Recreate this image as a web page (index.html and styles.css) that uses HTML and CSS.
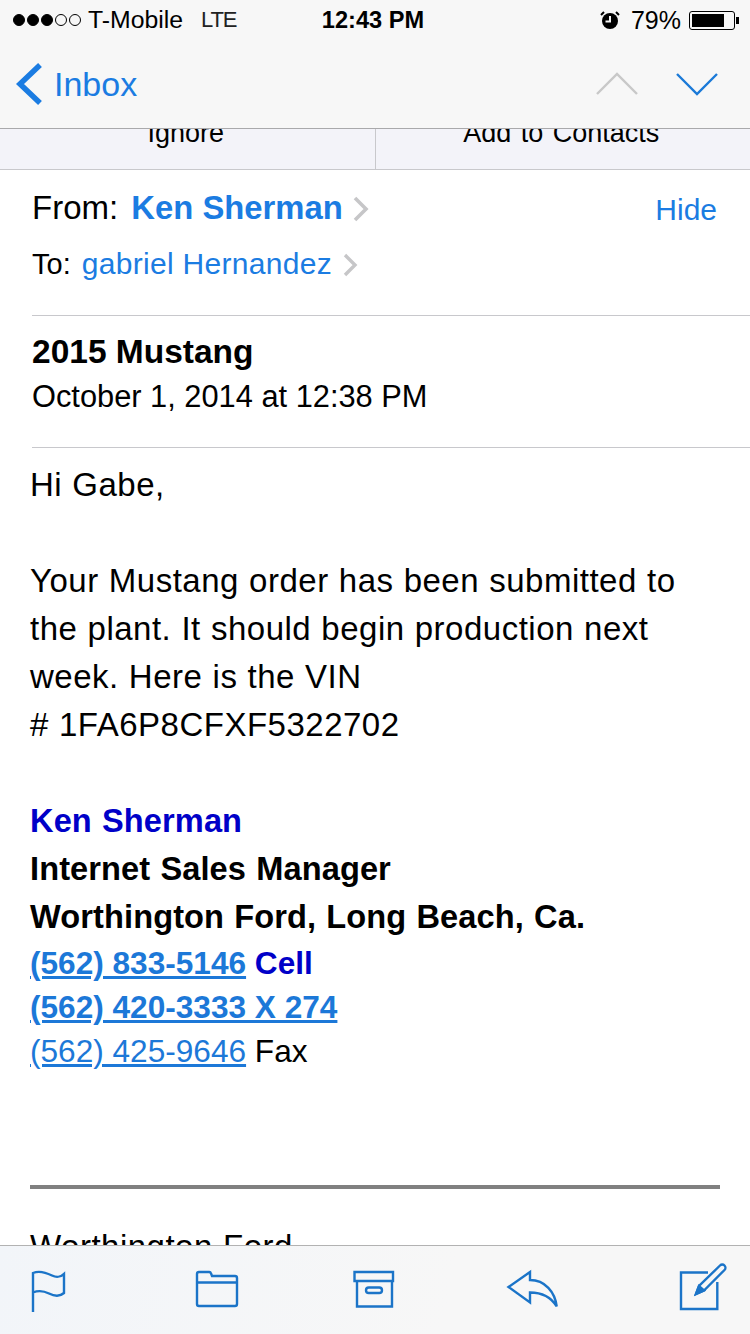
FILE: index.html
```html
<!DOCTYPE html>
<html>
  <head>
    <meta name="viewport" content="width=device-width, initial-scale=1" />
    <title>2015 Mustang</title>
    <link rel="stylesheet" href="styles.css">
  </head>
  <body>
    <div class="phone">
      <div class="topbar">
        <div class="status">
          <div class="status-left">
            <span class="signal">
              <i class="dot"></i><i class="dot"></i><i class="dot"></i><i class="dot off"></i><i class="dot off"></i>
            </span>
            <span class="carrier">T-Mobile</span>
            <span class="network">LTE</span>
          </div>
          <div class="clock">12:43 PM</div>
          <div class="status-right">
            <svg class="alarm" width="20" height="20" viewBox="0 0 20 20">
              <circle cx="10" cy="11" r="8" fill="#000" />
              <path d="M10 6v5.5H5.5" fill="none" stroke="#f7f7f7" stroke-width="2" />
              <path d="M1 5l3-3M19 5l-3-3" fill="none" stroke="#000" stroke-width="2" />
            </svg>
            <span class="percent">79%</span>
            <span class="battery"><i class="battery-fill"></i></span>
            <i class="battery-nub"></i>
          </div>
        </div>
        <div class="nav">
          <a class="back" href="#inbox">
            <svg width="28" height="44" viewBox="0 0 28 44">
              <path d="M25 3L5 22l20 19" fill="none" stroke="#1b7ce2" stroke-width="5.5" />
            </svg>
            <span>Inbox</span>
          </a>
          <div class="arrows">
            <svg width="42" height="24" viewBox="0 0 42 24">
              <path d="M1 22L21 2l20 20" fill="none" stroke="#c8c8c8" stroke-width="2.4" />
            </svg>
            <svg width="42" height="24" viewBox="0 0 42 24">
              <path d="M1 2l20 20L41 2" fill="none" stroke="#1b7ad8" stroke-width="2.4" />
            </svg>
          </div>
        </div>
      </div>

      <div class="main">
        <div class="actions">
          <div class="action"><span>Ignore</span></div>
          <div class="action second"><span>Add to Contacts</span></div>
        </div>

        <div class="sender">
          <div class="from-row">
            <div class="from">
              From: <b class="blue">Ken Sherman</b>
              <svg class="more" width="18" height="26" viewBox="0 0 18 26">
                <path d="M3 2l11 11L3 24" fill="none" stroke="#c6c6c8" stroke-width="3.6" />
              </svg>
            </div>
            <a class="hide" href="#hide">Hide</a>
          </div>
          <div class="to-row">
            To: <span class="blue to-name">gabriel Hernandez</span>
            <svg class="more to-more" width="16" height="24" viewBox="0 0 16 24">
              <path d="M2 2l10 10L2 22" fill="none" stroke="#c6c6c8" stroke-width="3.4" />
            </svg>
          </div>
        </div>

        <div class="subject">
          <div class="subject-title">2015 Mustang</div>
          <div class="subject-date">October 1, 2014 at 12:38 PM</div>
        </div>

        <div class="message">
          <p class="para">Hi Gabe,</p>
          <p class="para">
            Your Mustang order has been submitted to<br>
            the plant. It should begin production next<br>
            week. Here is the VIN<br>
            # 1FA6P8CFXF5322702
          </p>
          <div class="signature">
            <div class="sig-name">Ken Sherman</div>
            <div>Internet Sales Manager</div>
            <div>Worthington Ford, Long Beach, Ca.</div>
          </div>
          <div class="phones">
            <div class="strong"><a href="#cell">(562) 833-5146</a> <span class="sig-name">Cell</span></div>
            <div class="strong"><a href="#office">(562) 420-3333 X 274</a></div>
            <div><a href="#fax">(562) 425-9646</a> Fax</div>
          </div>
          <div class="rule"></div>
          <p class="para">Worthington Ford</p>
        </div>
      </div>

      <div class="toolbar">
        <svg width="70" height="88" viewBox="0 0 70 88">
          <path d="M20 66V27C27 24 34 27 39 29.5S47 31.500 51 28V47C47 50.500 41 50 36 47.500S26 44 20 46.500" />
        </svg>
        <svg width="70" height="88" viewBox="0 0 70 88">
          <path d="M20 58V28a2 2 0 0 1 2-2H32a2 2 0 0 1 2 1.500L35 30H58a2 2 0 0 1 2 2V58a2 2 0 0 1-2 2H22a2 2 0 0 1-2-2ZM20 36.500H60" />
        </svg>
        <svg width="70" height="88" viewBox="0 0 70 88">
          <path d="M13.500 26H52V35H13.500ZM16 35V60.500H51V35" />
          <rect x="25" y="41.500" width="16" height="5.500" rx="2.700" />
        </svg>
        <svg width="70" height="88" viewBox="0 0 70 88">
          <path d="M3.500 41L25 26V34C40 34 50 46 51.700 60.500C46 51 37 46.500 25 46.500V56.500Z" />
        </svg>
        <svg width="70" height="88" viewBox="0 0 70 88">
          <path d="M39 26.500H12V63H48.300V36" />
          <path d="M27 48L30 40L51 19.500A2.500 2.500 0 0 1 55.500 24L35 44.500Z" />
          <path d="M27 48L30 40L35 44.500Z" class="tip" />
        </svg>
      </div>
    </div>
  </body>
</html>
```

FILE: styles.css
```css
body {
  margin: 0;
  font-family: "Liberation Sans", Arial, sans-serif;
  color: #000;
  background-color: #fff;
}

a {
  text-decoration: none;
}

p {
  margin: 0;
}

.phone {
  display: flex;
  flex-direction: column;
  width: 750px;
  height: 1334px;
  overflow: hidden;
}

.blue {
  color: #1b7ce2;
}

/* status bar + nav */
.topbar {
  flex: none;
  height: 128px;
  background-color: #f7f7f7;
  border-bottom: 1px solid #a9a9ab;
}

.status {
  display: flex;
  align-items: center;
  justify-content: space-between;
  height: 40px;
  padding: 0 11px 0 13px;
}

.status-left,
.status-right {
  display: flex;
  align-items: center;
  flex: 1;
}

.status-right {
  justify-content: flex-end;
}

.signal {
  display: flex;
  gap: 2px;
  margin-right: 7px;
}

.dot {
  width: 12px;
  height: 12px;
  border: 1px solid #000;
  border-radius: 50%;
  background-color: #000;
  box-sizing: border-box;
}

.dot.off {
  background-color: transparent;
}

.carrier {
  font-size: 24.800px;
  margin-right: 18px;
}

.network {
  font-size: 22px;
  letter-spacing: -1.200px;
  color: #222;
}

.clock {
  margin-right: 6px;
  font-size: 23.600px;
  font-weight: bold;
}

.alarm {
  margin-right: 11px;
}

.percent {
  font-size: 25px;
  margin-right: 8px;
}

.battery {
  display: flex;
  width: 46px;
  height: 19px;
  padding: 2px;
  border: 1px solid #000;
  border-radius: 3px;
  box-sizing: border-box;
}

.battery-fill {
  width: 32px;
  background-color: #000;
}

.battery-nub {
  width: 3px;
  height: 7px;
  margin-left: 1px;
  background-color: #000;
}

.nav {
  display: flex;
  align-items: center;
  justify-content: space-between;
  height: 88px;
  padding: 0 32px 0 15px;
  box-sizing: border-box;
}

.back {
  display: flex;
  align-items: center;
  gap: 11px;
  font-size: 34px;
  color: #1b7ce2;
}

.arrows {
  display: flex;
  gap: 38px;
}

/* mail */
.main {
  flex: 1;
  min-height: 0;
  overflow: hidden;
}

.actions {
  display: flex;
  height: 41px;
  background-color: #f3f3f9;
  border-bottom: 1px solid #c8c8cc;
  box-sizing: border-box;
}

.action {
  flex: 1;
  height: 40px;
  overflow: hidden;
  font-size: 27px;
  line-height: 8px;
  word-spacing: 2px;
  text-align: center;
}

.action span {
  margin-right: 3px;
}

.action.second {
  border-left: 1px solid #c8c8cc;
}

.sender {
  margin-left: 32px;
  padding: 10px 33px 23px 0;
  border-bottom: 1px solid #c8c8cc;
}

.from-row {
  display: flex;
  align-items: center;
  justify-content: space-between;
  height: 56px;
}

.from {
  font-size: 33px;
}

.from b {
  margin-left: 4px;
  font-size: 32.800px;
  font-weight: bold;
}

.more {
  vertical-align: -3px;
}

.to-more {
  margin-left: 3px;
}

.hide {
  padding-top: 4px;
  font-size: 30px;
  color: #1b7ce2;
}

.to-row {
  height: 56px;
  line-height: 56px;
  font-size: 29px;
}

.to-name {
  margin-left: 3px;
  font-size: 30px;
  letter-spacing: 0.300px;
}

.subject {
  margin-left: 32px;
  padding: 14px 0 28px;
  border-bottom: 1px solid #c8c8cc;
}

.subject-title {
  font-size: 33.500px;
  font-weight: bold;
  line-height: 44px;
}

.subject-date {
  font-size: 30.800px;
  line-height: 45px;
}

.message {
  padding: 13px 30px 0;
  font-size: 33px;
  line-height: 48px;
  word-spacing: 0.500px;
  letter-spacing: 0.500px;
}

.para {
  margin-bottom: 48px;
}

.signature {
  font-size: 32.600px;
  font-weight: bold;
  word-spacing: 1px;
  letter-spacing: 0.100px;
}

.sig-name {
  color: #0000c8;
  font-weight: bold;
}

.phones {
  line-height: 44px;
  font-size: 31.600px;
  word-spacing: 0;
  letter-spacing: 0;
}

.phones a {
  color: #1c78d8;
  text-decoration: underline;
}

.strong {
  font-weight: bold;
}

.rule {
  height: 4px;
  margin: 112px 0 34px;
  background-color: #808080;
}

/* bottom icons */
.toolbar {
  display: flex;
  flex: none;
  justify-content: space-between;
  height: 88px;
  padding: 0 11px 0 13px;
  background: linear-gradient(100deg, #f2f5f9, #f7f7f7 60%);
  border-top: 1px solid #b2b2b2;
}

.toolbar svg {
  fill: none;
  stroke: #1b74c8;
  stroke-width: 2.4;
}

.toolbar .tip {
  fill: #1b74c8;
}
```
